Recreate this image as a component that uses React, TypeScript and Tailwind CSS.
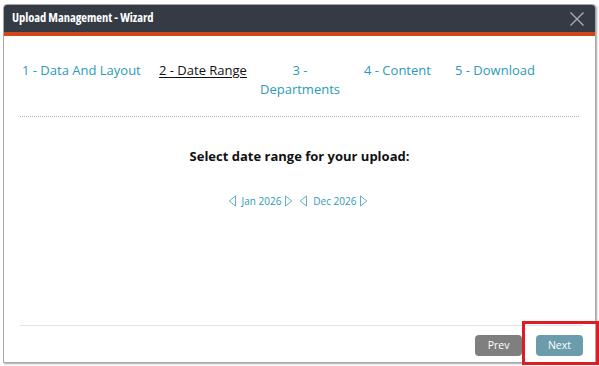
import React from "react";

const LeftTri = () => (
  <svg width="9" height="12" viewBox="0 0 9 12" className="shrink-0">
    <path d="M7.5 1 L1.2 6 L7.5 11 Z" fill="none" stroke="#5fb0c6" strokeWidth="1" strokeLinejoin="round" />
  </svg>
);
const RightTri = () => (
  <svg width="9" height="12" viewBox="0 0 9 12" className="shrink-0">
    <path d="M1.5 1 L7.8 6 L1.5 11 Z" fill="none" stroke="#5fb0c6" strokeWidth="1" strokeLinejoin="round" />
  </svg>
);

export default function App() {
  return (
    <div
      className="relative w-[599px] h-[366px] bg-white overflow-hidden"
      style={{ fontFamily: '"Open Sans", "Noto Sans", sans-serif' }}
    >
      <div className="absolute left-[3px] top-[4px] w-[593px] h-[359px] flex flex-col rounded-t-[4px] border border-[#a8a8a8] shadow-[1px_1px_2px_rgba(0,0,0,0.35)] bg-white overflow-hidden">
        <div className="h-[27px] bg-[#353b45] flex items-center justify-between pl-[8px] pr-[10px] shrink-0">
          <span className="text-white text-[12.5px] font-bold tracking-[-0.05px] font-stretch-[86%]">Upload Management - Wizard</span>
          <svg width="16" height="16" viewBox="0 0 16 16">
            <path d="M1.5 1.5 L14.5 14.5 M14.5 1.5 L1.5 14.5" stroke="#a9adb3" strokeWidth="1.4" />
          </svg>
        </div>
        <div className="h-[4px] bg-[#d2461a] shrink-0" />
        <div className="flex-1 flex flex-col px-[16px]">
          <div className="flex items-start pt-[25px] pl-[2px] text-[13px] leading-[19px] text-[#2c9ab6] h-[81px] border-b border-dotted border-[#b5b5b5]">
            <span className="w-[137px]">1 - Data And Layout</span>
            <span className="w-[101px] text-[#111] underline underline-offset-[2px]">2 - Date Range</span>
            <span className="w-[80px] text-center">3 -<br />Departments</span>
            <span className="ml-[24px] w-[91px]">4 - Content</span>
            <span>5 - Download</span>
          </div>
          <div className="flex flex-col items-center pt-[30px]">
            <div className="text-[13px] font-bold text-[#111]">Select date range for your upload:</div>
            <div className="flex items-center mt-[27px] text-[10px] text-[#2c9ab6] ml-[-3px]">
              <LeftTri />
              <span className="ml-[5px] mr-[3px]">Jan 2026</span>
              <RightTri />
              <span className="w-[6px]" />
              <LeftTri />
              <span className="ml-[5px] mr-[3px]">Dec 2026</span>
              <RightTri />
            </div>
          </div>
          <div className="flex-1" />
          <div className="border-t border-[#e3e3e3] h-[37px] flex items-center justify-end gap-[14px] mr-[-4px] pt-[3px]">
            <button className="w-[47px] h-[21px] rounded-[4px] bg-[#7f7f7f] text-white text-[10.5px]">Prev</button>
            <button className="w-[47px] h-[21px] rounded-[4px] bg-[#6b9cab] text-white text-[10.5px]">Next</button>
          </div>
        </div>
      </div>
      <div className="absolute left-[522px] top-[321px] w-[77px] h-[44px] border-[3px] border-[#e01b24]" />
    </div>
  );
}
